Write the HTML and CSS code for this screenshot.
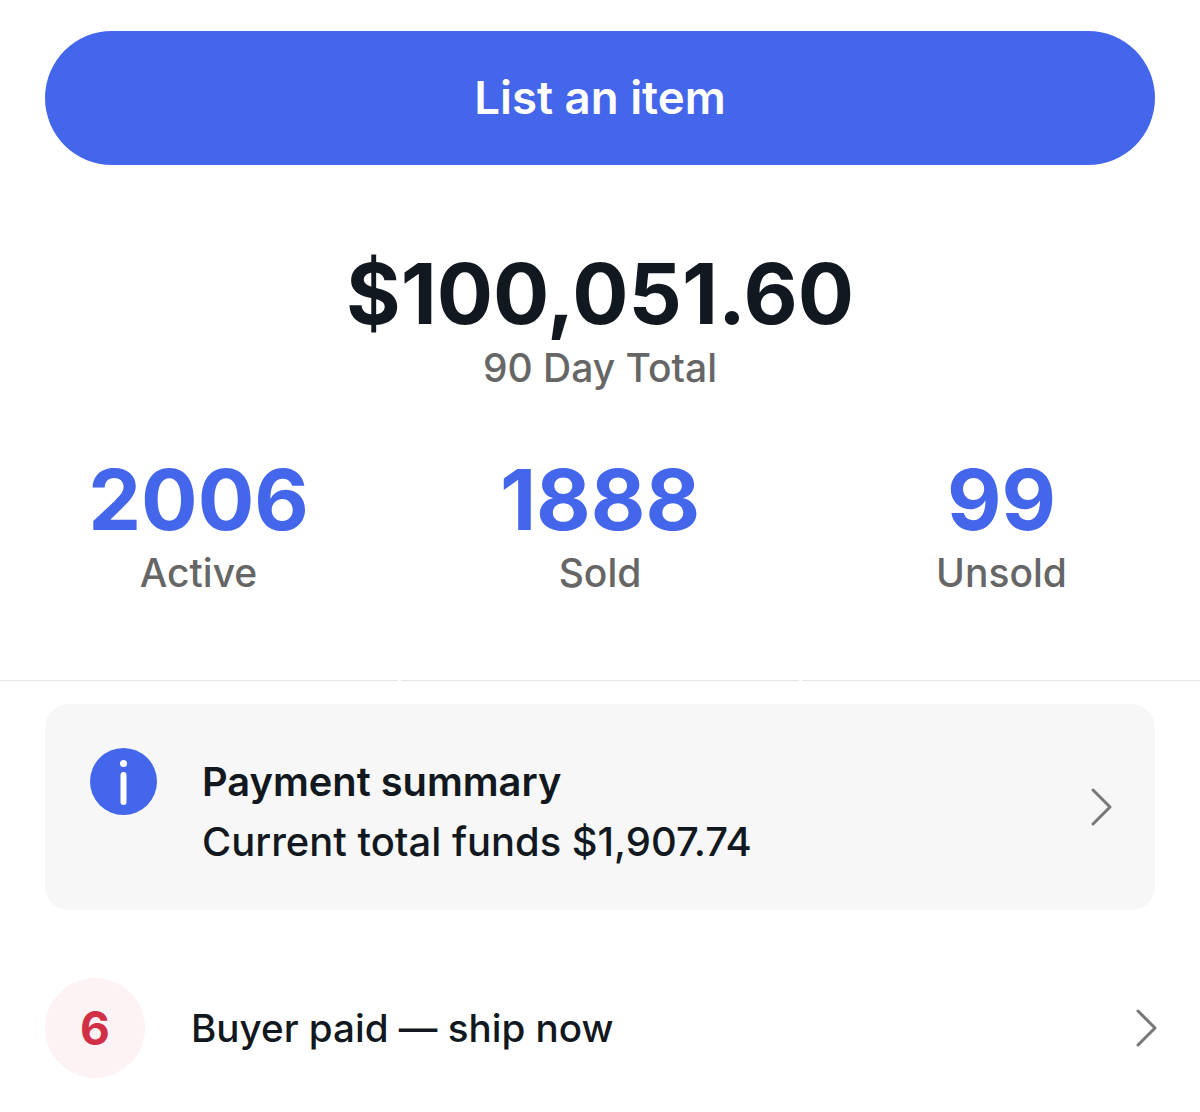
FILE: index.html
```html
<!DOCTYPE html>
<html>
<head>
  <title>Selling</title>
  <link rel="stylesheet" href="styles.css">
</head>
<body>
  <div class="top">
    <button class="list-button">List an item</button>
  </div>

  <div class="total">
    <div class="total-amount">$100,051.60</div>
    <div class="total-label">90 Day Total</div>
  </div>

  <div class="stats">
    <div class="stat">
      <div class="stat-number">2006</div>
      <div class="stat-label">Active</div>
    </div>
    <div class="stat">
      <div class="stat-number">1888</div>
      <div class="stat-label">Sold</div>
    </div>
    <div class="stat">
      <div class="stat-number">99</div>
      <div class="stat-label">Unsold</div>
    </div>
  </div>

  <div class="divider">
    <span></span>
    <span></span>
    <span></span>
  </div>

  <div class="summary-card">
    <svg class="info-icon" width="67" height="67" viewBox="0 0 67 67">
      <circle cx="33.5" cy="33.5" r="33.5" fill="#4366ea"/>
      <circle cx="33.5" cy="15.5" r="3.5" fill="#fff"/>
      <rect x="30.5" y="24" width="6" height="33" rx="3" fill="#fff"/>
    </svg>
    <div class="summary-text">
      <div class="summary-title">Payment summary</div>
      <div class="summary-sub">Current total funds $1,907.74</div>
    </div>
    <svg class="chevron" width="24" height="40" viewBox="0 0 24 40">
      <path d="M4 3 L21 20 L4 37" fill="none" stroke="#777" stroke-width="3" stroke-linecap="round" stroke-linejoin="round"/>
    </svg>
  </div>

  <div class="task-row">
    <div class="task-count">6</div>
    <div class="task-label">Buyer paid — ship now</div>
    <svg class="chevron" width="24" height="40" viewBox="0 0 24 40">
      <path d="M4 3 L21 20 L4 37" fill="none" stroke="#777" stroke-width="3" stroke-linecap="round" stroke-linejoin="round"/>
    </svg>
  </div>
</body>
</html>
```

FILE: styles.css
```css
body {
  font-family: 'Inter', sans-serif;
  margin: 0;
  padding: 0;
  background: #fff;
  color: #111820;
  height: 1112px;
  overflow: hidden;
}

.top {
  padding: 31px 45px 0;
}

.list-button {
  display: block;
  width: 100%;
  height: 134px;
  padding: 0 0 2px;
  border: none;
  border-radius: 67px;
  background-color: #4366ea;
  color: #fff;
  font-family: inherit;
  font-size: 45.6px;
  font-weight: 600;
}

.total {
  margin-top: 89px;
  text-align: center;
}

.total-amount {
  font-size: 83.5px;
  font-weight: 700;
  line-height: 80px;
}

.total-label {
  margin-top: 11px;
  font-size: 39px;
  font-weight: 500;
  line-height: 46px;
  color: #666;
}

.stats {
  display: grid;
  grid-template-columns: 397px 406px 397px;
  margin-top: 69px;
  text-align: center;
}

.stat-number {
  font-size: 84px;
  font-weight: 700;
  line-height: 80px;
  color: #4366ea;
}

.stat-label {
  margin-top: 10px;
  font-size: 39px;
  font-weight: 500;
  line-height: 46px;
  color: #666;
}

.divider {
  display: flex;
  gap: 3px;
  margin-top: 84px;
}

.divider span {
  flex: 1;
  height: 1px;
  background: #e5e5e5;
}

.summary-card {
  display: flex;
  align-items: flex-start;
  height: 206px;
  margin: 23px 45px 0;
  padding: 44px 42px 0 45px;
  box-sizing: border-box;
  background: #f7f7f7;
  border-radius: 24px;
}

.info-icon {
  flex-shrink: 0;
}

.summary-text {
  flex: 1;
  margin-left: 45px;
  margin-top: 4px;
}

.summary-title {
  font-size: 39.8px;
  font-weight: 600;
  line-height: 60px;
}

.summary-sub {
  font-size: 39.9px;
  font-weight: 500;
  line-height: 60px;
}

.summary-card .chevron {
  margin-top: 39px;
}

.task-row {
  display: flex;
  align-items: center;
  margin: 68px 42px 0 45px;
}

.task-count {
  width: 100px;
  height: 100px;
  border-radius: 50%;
  background: #fdf2f4;
  color: #d02f45;
  font-size: 46px;
  font-weight: 700;
  line-height: 100px;
  text-align: center;
}

.task-label {
  flex: 1;
  margin-left: 46px;
  font-size: 38.6px;
  font-weight: 500;
}
```
